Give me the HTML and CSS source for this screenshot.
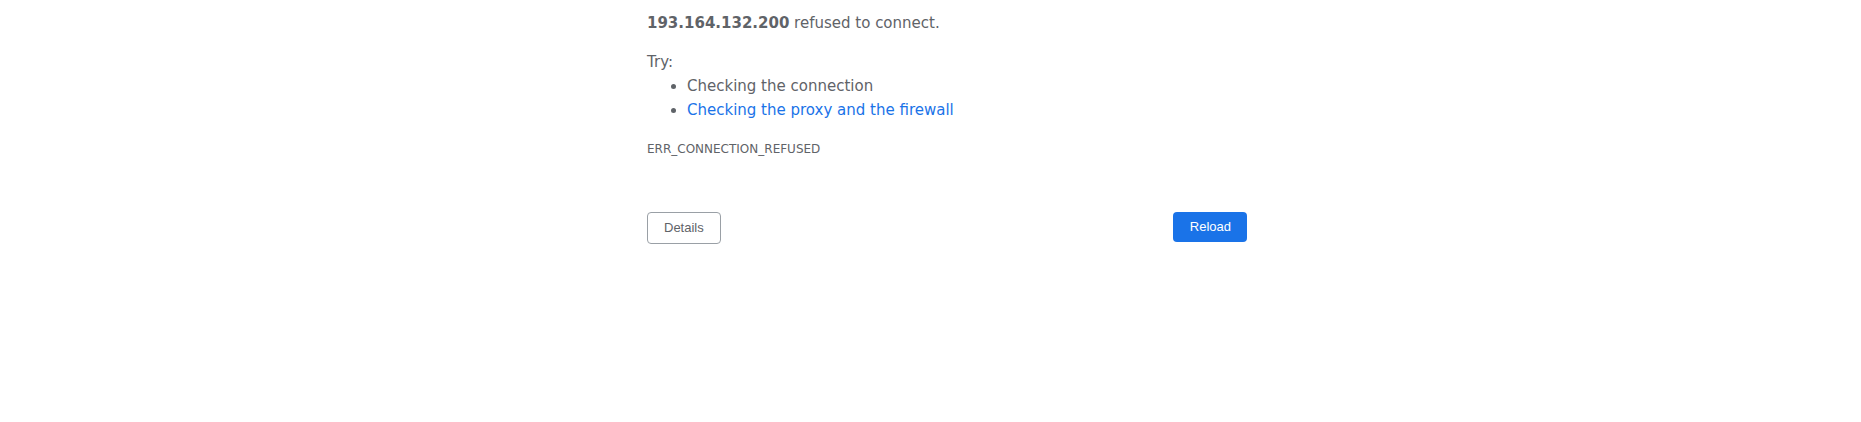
FILE: index.html
```html
<!DOCTYPE html>
<html lang="en">
<head>
<meta charset="utf-8">
<title>193.164.132.200</title>
<link rel="stylesheet" href="styles.css">
</head>
<body>
<div class="page">
  <div class="wrapper">
    <div class="main-message">
      <p class="summary"><strong>193.164.132.200</strong> refused to connect.</p>
      <div class="suggestions">
        <p class="try">Try:</p>
        <ul>
          <li>Checking the connection</li>
          <li><a href="#">Checking the proxy and the firewall</a></li>
        </ul>
      </div>
      <div class="error-code">ERR_CONNECTION_REFUSED</div>
    </div>
    <div class="buttons">
      <button class="details">Details</button>
      <button class="reload">Reload</button>
    </div>
  </div>
</div>
</body>
</html>
```
FILE: styles.css
```css
html, body {
  margin: 0;
  padding: 0;
  background: #fff;
}
body {
  font-family: "DejaVu Sans", sans-serif;
  font-size: 12px;
  color: #5f6368;
  line-height: 1.55;
}
.page {
  display: flex;
  justify-content: center;
  padding-left: 33px;
}
.wrapper {
  width: 600px;
  padding-top: 11px;
}
.main-message {
  font-size: 15px;
  line-height: 24px;
}
.summary {
  margin: 0;
}
.summary strong {
  font-weight: bold;
  color: #5f6368;
}
.try {
  margin: 15px 0 0;
}
ul {
  margin: 0;
  padding-left: 40px;
}
a {
  color: #1a73e8;
  text-decoration: none;
}
.error-code {
  font-size: 12px;
  margin-top: 18px;
  line-height: 18.6px;
}
.buttons {
  display: flex;
  justify-content: space-between;
  align-items: flex-start;
  margin-top: 53px;
}
button {
  font-family: "Liberation Sans", Arial, sans-serif;
  font-size: 13px;
  line-height: 14px;
  border-radius: 4px;
  cursor: pointer;
}
.details {
  background: #fff;
  border: 1px solid #9aa0a6;
  color: #5f6368;
  padding: 8px 16px;
}
.reload {
  background: #1a73e8;
  border: none;
  color: #fff;
  padding: 8px 16px 8px 17px;
}
```
